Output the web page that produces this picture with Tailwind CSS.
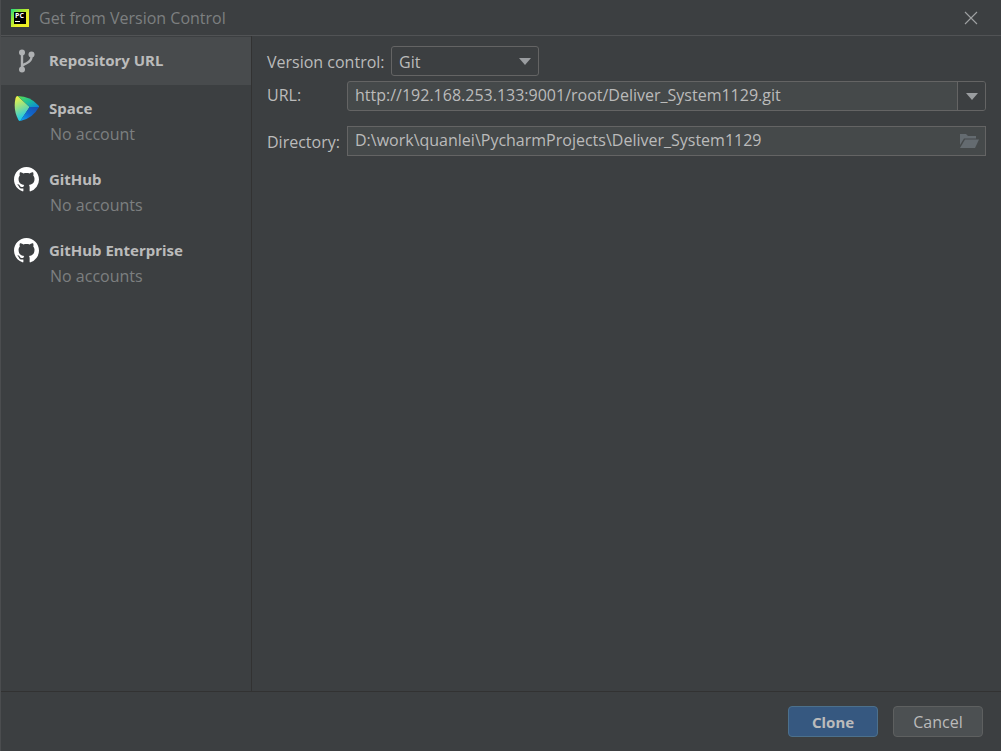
<!DOCTYPE html>
<html lang="en">
    <head>
        <meta charset="UTF-8">
        <meta name="viewport" content="width=device-width, initial-scale=1.0">
        <title>Get from Version Control</title>
        <script src="https://cdn.jsdelivr.net/npm/@tailwindcss/browser@4"></script>
    </head>
    <body class="bg-[#3c3f41] text-[#bbbbbb] text-[16px] font-['Open_Sans','Noto_Sans',sans-serif]">
        <div class="flex flex-col min-h-screen border-l border-[#4b4d4f]">

            <!-- title bar -->
            <header class="flex items-center h-9 pl-[9px] pr-5 border-b border-[#515355]">
                <svg class="w-5 h-5" viewBox="0 0 20 20">
                    <defs>
                        <linearGradient id="pc" x1="0" y1="0" x2="1" y2="1">
                            <stop offset="0" stop-color="#21d789"/>
                            <stop offset=".3" stop-color="#8fe83a"/>
                            <stop offset=".6" stop-color="#e8f02a"/>
                            <stop offset="1" stop-color="#f0ee20"/>
                        </linearGradient>
                    </defs>
                    <rect x="1" y="1" width="18" height="18" fill="url(#pc)"/>
                    <rect x="4" y="4" width="12" height="12" fill="#000"/>
                    <text x="5" y="10" font-size="7" font-weight="700" fill="#fff">PC</text>
                    <rect x="5" y="13" width="5" height="1" fill="#fff"/>
                </svg>
                <h1 class="grow ml-[9px] text-[#7d7f80]">Get from Version Control</h1>
                <button type="button" aria-label="Close">
                    <svg class="w-[20px] h-[20px]" viewBox="0 0 20 20" fill="none" stroke="#a0a2a3" stroke-width="1.1">
                        <path d="M4 4l12 12M16 4L4 16"/>
                    </svg>
                </button>
            </header>

            <div class="flex grow">
                <!-- sources -->
                <nav class="w-[251px] shrink-0 border-r border-[#323232] pt-px">
                    <a href="#" class="flex items-center h-12 pl-[13px] bg-[#484b4d]">
                        <svg class="w-[25px] h-[25px] mr-[10px]" viewBox="0 0 25 25" fill="none" stroke="#afb1b3" stroke-width="2.4">
                            <path d="M8 4v16M17.500 6v2c0 4-3 5.200-5.500 6.500c-2 1-3.500 1.500-4 3"/>
                            <g fill="#afb1b3" stroke="none">
                                <circle cx="8" cy="3.500" r="3"/>
                                <circle cx="17.500" cy="5.500" r="3"/>
                                <circle cx="8" cy="20.500" r="3"/>
                            </g>
                        </svg>
                        <b class="text-[15px] leading-6 pb-[2px] font-['Noto_Sans',sans-serif]">Repository URL</b>
                    </a>
                    <a href="#" class="flex h-[71px] pt-[11px] pl-[13px] leading-6">
                        <svg class="w-[25px] h-[25px] mr-[10px]" viewBox="0 0 24 24">
                            <defs>
                                <linearGradient id="s1" x1="0" y1="0" x2=".3" y2="1">
                                    <stop offset="0" stop-color="#fff43a"/>
                                    <stop offset=".5" stop-color="#8fe08a"/>
                                    <stop offset="1" stop-color="#14c8f0"/>
                                </linearGradient>
                                <linearGradient id="s2" x1="0" y1="0" x2="1" y2="1">
                                    <stop offset="0" stop-color="#5fe04a"/>
                                    <stop offset=".5" stop-color="#1cc09a"/>
                                    <stop offset="1" stop-color="#0a80e0"/>
                                </linearGradient>
                                <linearGradient id="s3" x1="0" y1="1" x2="1" y2="0">
                                    <stop offset="0" stop-color="#10a8f5"/>
                                    <stop offset=".5" stop-color="#1068cc"/>
                                    <stop offset="1" stop-color="#1a4fb0"/>
                                </linearGradient>
                            </defs>
                            <path fill="url(#s1)" d="M3.500 0L15 10.500L6 24Q4.500 24 4 22.500Q-1 13 1.500 2Q2 0 3.500 0z"/>
                            <path fill="url(#s2)" d="M3.500 0Q16 .5 23.500 9Q24.500 10.200 23.800 10.800L15 10.500z"/>
                            <path fill="url(#s3)" d="M15 10.500H24Q18 21.500 6 24z"/>
                        </svg>
                        <span>
                            <b class="block text-[15px] leading-6 font-['Noto_Sans',sans-serif]">Space</b>
                            <span class="block mt-[2px] ml-px text-[#7d7f80]">No account</span>
                        </span>
                    </a>
                    <a href="#" class="flex h-[71px] pt-[11px] pl-[13px] leading-6">
                        <svg class="w-[25px] h-[25px] mr-[10px]" viewBox="0 0 16 16" fill="#fff">
                            <path d="M8 0C3.580 0 0 3.580 0 8c0 3.540 2.290 6.530 5.470 7.590.4.070.55-.17.55-.38 0-.19-.01-.82-.01-1.490-2.010.37-2.530-.49-2.690-.94-.09-.23-.48-.94-.82-1.130-.28-.15-.68-.52-.01-.53.63-.01 1.080.58 1.230.82.72 1.210 1.870.87 2.330.66.07-.52.28-.87.51-1.070-1.780-.2-3.640-.89-3.640-3.950 0-.87.31-1.590.82-2.150-.08-.2-.36-1.020.08-2.120 0 0 .67-.21 2.200.82.64-.18 1.320-.27 2-.27s1.360.09 2 .27c1.530-1.040 2.200-.82 2.200-.82.44 1.100.16 1.920.08 2.120.51.56.82 1.270.82 2.150 0 3.070-1.870 3.750-3.650 3.950.29.25.54.73.54 1.480 0 1.070-.01 1.930-.01 2.200 0 .21.15.46.55.38A8.010 8.010 0 0 0 16 8c0-4.420-3.580-8-8-8z"/>
                        </svg>
                        <span>
                            <b class="block text-[15px] leading-6 font-['Noto_Sans',sans-serif]">GitHub</b>
                            <span class="block mt-[2px] ml-px text-[#7d7f80]">No accounts</span>
                        </span>
                    </a>
                    <a href="#" class="flex h-[71px] pt-[11px] pl-[13px] leading-6">
                        <svg class="w-[25px] h-[25px] mr-[10px]" viewBox="0 0 16 16" fill="#fff">
                            <path d="M8 0C3.580 0 0 3.580 0 8c0 3.540 2.290 6.530 5.470 7.590.4.070.55-.17.55-.38 0-.19-.01-.82-.01-1.490-2.010.37-2.530-.49-2.690-.94-.09-.23-.48-.94-.82-1.130-.28-.15-.68-.52-.01-.53.63-.01 1.080.58 1.230.82.72 1.210 1.870.87 2.330.66.07-.52.28-.87.51-1.070-1.780-.2-3.640-.89-3.640-3.950 0-.87.31-1.590.82-2.150-.08-.2-.36-1.020.08-2.120 0 0 .67-.21 2.200.82.64-.18 1.320-.27 2-.27s1.360.09 2 .27c1.530-1.040 2.200-.82 2.200-.82.44 1.100.16 1.920.08 2.120.51.56.82 1.270.82 2.150 0 3.070-1.870 3.750-3.650 3.950.29.25.54.73.54 1.480 0 1.070-.01 1.930-.01 2.200 0 .21.15.46.55.38A8.010 8.010 0 0 0 16 8c0-4.420-3.580-8-8-8z"/>
                        </svg>
                        <span>
                            <b class="block text-[15px] leading-6 font-['Noto_Sans',sans-serif]">GitHub Enterprise</b>
                            <span class="block mt-[2px] ml-px text-[#7d7f80]">No accounts</span>
                        </span>
                    </a>
                </nav>

                <!-- repository form -->
                <main class="grow pt-[10px] px-[15px]">
                    <div class="flex items-center">
                        <label for="vcs" class="w-[124px] shrink-0 pt-[2px]">Version control:</label>
                        <div class="relative w-[148px]">
                            <select id="vcs" class="appearance-none block w-full h-[30px] pl-[7px] pt-[2px] rounded-[3px] border border-[#646464] bg-[#3c3f41] outline-none">
                                <option>Git</option>
                            </select>
                            <svg class="absolute right-2 top-3 w-3 h-[7px] pointer-events-none" viewBox="0 0 12 7" fill="#9a9da0"><path d="M0 0h12L6 7z"/></svg>
                        </div>
                    </div>
                    <div class="flex items-center mt-[5px]">
                        <label for="url" class="w-20 shrink-0 pb-[2px]">URL:</label>
                        <div class="flex grow h-[30px] rounded-[3px] border border-[#646464] bg-[#45494a]">
                            <input id="url" type="text" class="grow min-w-0 pl-[7px] pb-[2px] outline-none" value="http://192.168.253.133:9001/root/Deliver_System1129.git">
                            <button type="button" aria-label="Recent URLs" class="flex items-center justify-center w-7 rounded-r-[2px] border-l border-[#646464] bg-[#3c3f41]">
                                <svg class="w-3 h-[7px]" viewBox="0 0 12 7" fill="#9a9da0"><path d="M0 0h12L6 7z"/></svg>
                            </button>
                        </div>
                    </div>
                    <div class="flex items-center mt-[15px]">
                        <label for="dir" class="w-20 shrink-0 pt-[2px]">Directory:</label>
                        <div class="flex grow h-[30px] border border-[#646464] bg-[#45494a]">
                            <input id="dir" type="text" class="grow min-w-0 pl-[7px] pb-[2px] outline-none" value="D:\work\quanlei\PycharmProjects\Deliver_System1129">
                            <button type="button" aria-label="Browse" class="pr-[6px]">
                                <svg class="w-[19px] h-[14px]" viewBox="0 0 19 14" fill="#646b70">
                                    <path d="M0 0h6l2 2h8v2.500H4L0 11z"/>
                                    <path d="M5 5.500h14L15 14H0z"/>
                                </svg>
                            </button>
                        </div>
                    </div>
                </main>
            </div>

            <!-- actions -->
            <footer class="flex gap-[15px] justify-end pt-[14px] pb-[14px] pr-[18px] border-t border-[#323232]">
                <button type="button" class="w-[90px] h-[31px] pt-px rounded-[4px] border border-[#4c708c] bg-[#365880] text-[15px] font-['Noto_Sans',sans-serif] font-bold">Clone</button>
                <button type="button" class="w-[90px] h-[31px] pt-px rounded-[4px] border border-[#5e6060] bg-[#4c5052]">Cancel</button>
            </footer>
        </div>
    </body>
</html>
